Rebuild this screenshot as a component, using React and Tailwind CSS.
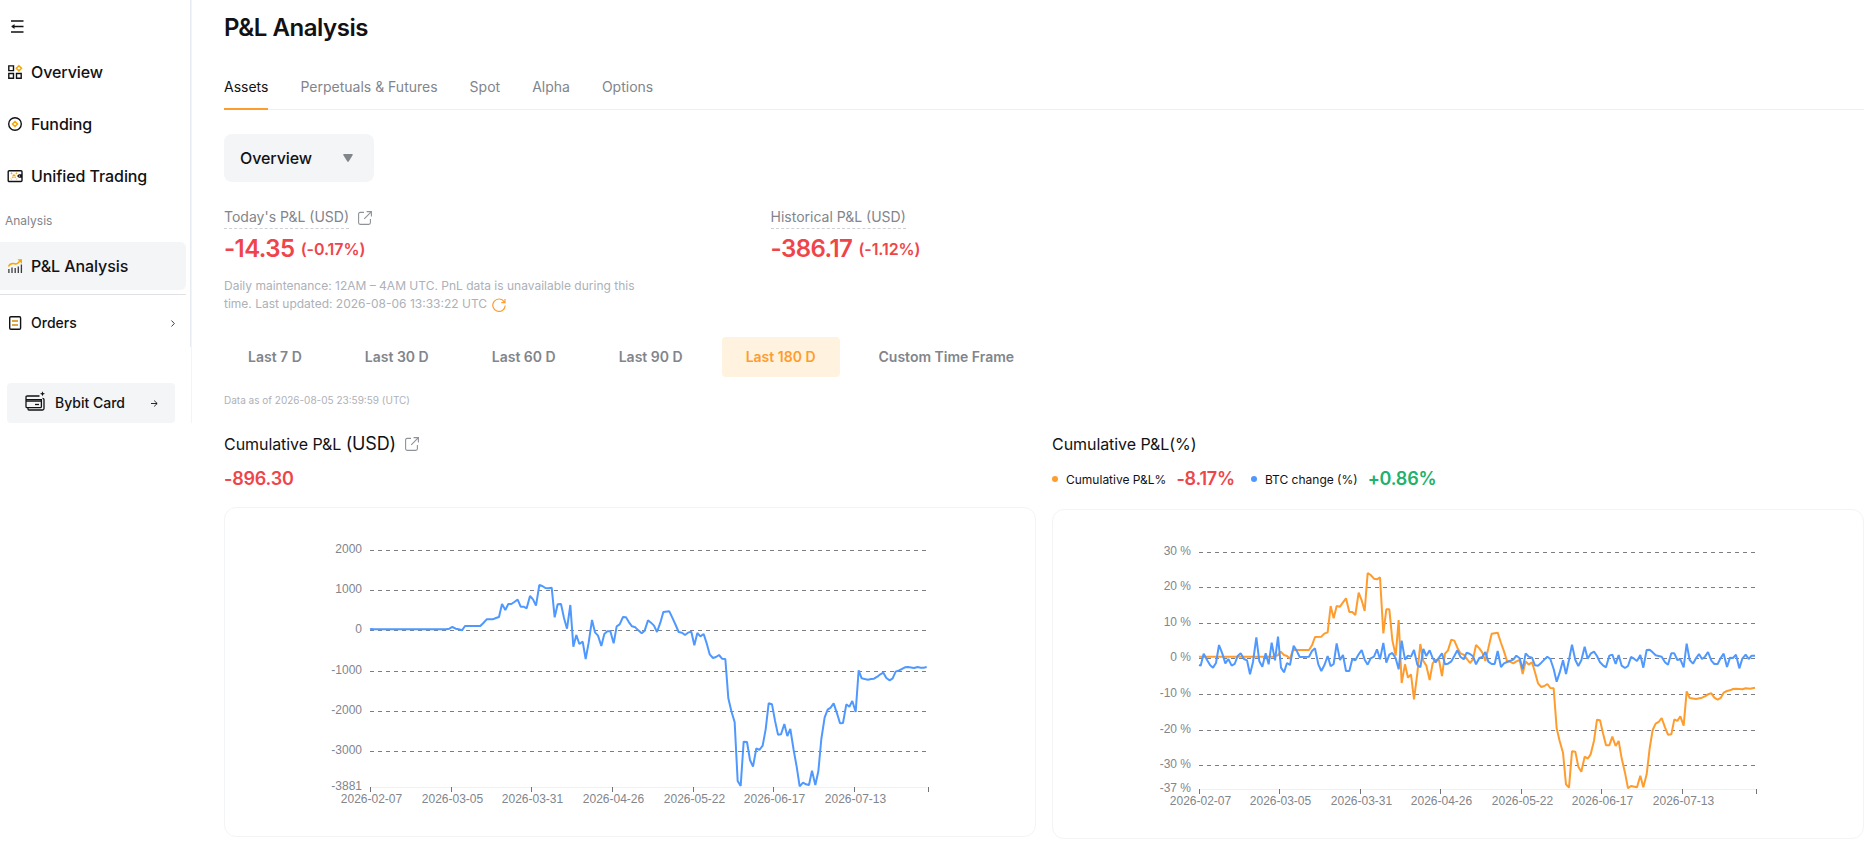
import React from "react";

const INK = "#121214";
const ORANGE = "#ff9c2e";
const BLUE = "#4f98ff";

const DATES = ["2026-02-07", "2026-03-05", "2026-03-31", "2026-04-26", "2026-05-22", "2026-06-17", "2026-07-13"];

// Series vertices, in thirds of a pixel from the plot origin.
const USD_LINE =
  "150,298 155,297 161,298 378,298 388,296 397,291 407,296 416,298 426,301 435,288 481,288 490,279 500,268 518,268 528,264 537,261 546,222 556,240 565,222 574,222 583,216 593,209 602,230 611,230 620,235 630,198 639,208 648,227 658,165 667,168 676,174 686,175 695,173 704,262 713,223 723,222 732,264 741,296 751,225 760,350 769,315 778,342 788,335 797,387 806,338 816,270 825,307 834,317 844,348 853,312 862,304 871,304 881,340 890,289 899,283 909,261 918,262 927,277 936,289 946,292 955,301 965,310 974,302 984,271 993,278 1002,287 1011,306 1021,278 1030,246 1048,244 1058,265 1067,285 1076,306 1086,308 1095,315 1104,308 1114,305 1123,346 1132,309 1141,319 1151,312 1160,340 1169,373 1179,384 1188,381 1197,375 1206,386 1216,387 1225,505 1234,543 1244,577 1253,753 1262,768 1271,635 1281,636 1290,690 1299,710 1309,655 1318,660 1328,647 1337,598 1346,520 1356,523 1365,572 1374,614 1383,613 1393,582 1402,618 1411,597 1421,660 1430,710 1439,769 1449,758 1458,763 1467,765 1476,722 1486,765 1495,724 1504,627 1514,562 1523,539 1532,533 1541,520 1551,550 1560,580 1569,579 1579,523 1588,530 1597,513 1607,546 1616,421 1625,445 1634,447 1644,449 1653,447 1662,446 1672,440 1681,433 1690,428 1699,444 1709,451 1718,445 1727,425 1737,421 1746,417 1755,412 1764,411 1782,414 1793,411 1802,413 1811,413 1820,411";
const PCT_LINE =
  "147,380 370,380 383,376 392,365 402,375 411,378 420,386 429,360 477,360 486,346 495,321 514,320 523,311 533,307 542,228 551,265 560,228 570,230 579,217 588,205 598,246 607,246 616,255 626,188 635,211 644,243 653,129 662,135 672,146 681,148 690,142 700,310 709,238 718,238 727,330 737,377 746,270 755,459 765,403 774,443 783,433 792,508 802,430 811,342 820,393 829,407 839,450 848,400 857,389 867,390 876,438 885,371 894,361 904,329 913,332 922,353 931,370 941,374 950,386 960,399 969,388 978,345 988,355 997,368 1006,393 1015,355 1025,311 1043,308 1053,339 1062,364 1071,393 1080,395 1090,400 1099,394 1109,390 1118,432 1127,394 1136,404 1146,397 1155,427 1164,460 1174,471 1183,468 1192,462 1201,474 1211,475 1220,595 1229,633 1239,668 1248,763 1257,773 1266,664 1276,665 1285,710 1294,725 1304,680 1313,686 1322,673 1332,632 1341,569 1350,571 1359,610 1368,646 1378,646 1387,620 1397,648 1406,633 1415,685 1425,728 1434,775 1443,768 1461,772 1471,737 1480,772 1490,733 1499,655 1508,600 1517,581 1526,576 1535,564 1545,592 1554,614 1564,613 1573,568 1582,573 1591,559 1601,587 1610,484 1619,504 1638,507 1656,503 1665,499 1674,493 1684,490 1693,503 1703,509 1712,504 1721,488 1731,483 1740,481 1749,477 1758,476 1777,478 1787,475 1800,476 1815,473";
const BTC_LINE =
  "147,405 152,407 161,371 170,388 180,405 189,413 198,399 207,345 217,371 226,400 235,387 245,407 254,402 263,378 272,370 282,387 291,391 300,433 309,396 319,322 328,394 337,410 347,370 356,403 365,338 375,391 384,320 393,413 402,427 411,399 420,405 431,347 440,362 449,381 477,380 486,363 495,355 505,403 514,423 523,406 533,378 542,409 551,402 560,340 570,390 579,375 588,423 598,423 607,387 616,391 626,373 635,360 644,389 653,404 662,385 672,380 681,358 690,388 700,339 709,398 718,374 727,369 737,385 746,418 755,332 765,389 774,377 783,380 792,360 802,404 811,412 820,357 829,378 839,361 848,384 857,397 867,383 876,370 885,403 894,401 904,394 913,378 922,361 931,380 941,388 950,368 960,372 969,379 978,403 988,384 997,381 1006,366 1015,395 1025,402 1034,402 1043,363 1053,411 1062,400 1071,396 1090,389 1099,377 1109,385 1118,418 1127,370 1136,380 1146,383 1155,406 1164,407 1174,398 1192,380 1201,387 1211,417 1220,455 1229,428 1239,391 1248,432 1257,390 1266,344 1276,390 1285,408 1294,391 1304,350 1313,386 1322,371 1332,365 1341,378 1350,397 1359,406 1368,412 1378,377 1387,374 1397,402 1406,375 1415,407 1425,414 1434,408 1443,381 1452,386 1461,393 1471,375 1480,413 1490,360 1499,359 1508,367 1517,376 1535,380 1545,397 1554,404 1564,370 1573,370 1582,390 1591,388 1601,412 1610,341 1619,390 1629,401 1638,385 1647,372 1656,387 1665,380 1674,366 1684,392 1693,402 1703,402 1712,384 1721,371 1731,411 1740,383 1749,384 1758,374 1768,415 1777,386 1787,374 1796,387 1805,377 1815,377";

function Chart({ origin, start, grid, ticks, min, labelX, series }) {
  return (
    <svg viewBox="0 0 810 328" className="block h-[328px] w-[810px] font-['Liberation_Sans',sans-serif]">
      <line x1={start} x2={start + 557} y1="279.5" y2="279.5" stroke="#f0f1f3" />
      {grid.map(([label, y]) => (
        <g key={label}>
          <line x1={start} x2={start + 557} y1={y} y2={y} stroke="#7b7f85" strokeDasharray="4 4" />
          <text x={labelX} y={y + 2.5} textAnchor="end" fontSize="12" fill="#81858c">{label}</text>
        </g>
      ))}
      <text x={labelX} y="282" textAnchor="end" fontSize="12" fill="#81858c">{min}</text>
      {ticks.map((x, i) => (
        <g key={x}>
          <line x1={x} x2={x} y1="279" y2="284" stroke="#71757a" />
          <text x={x + 1} y="295" textAnchor="middle" fontSize="12" fill="#81858c">{DATES[i]}</text>
        </g>
      ))}
      <g transform={`translate(${origin}) scale(0.33333)`} fill="none" strokeWidth="6" strokeLinejoin="bevel">
        {series.map(([color, points]) => (
          <polyline key={color} points={points} stroke={color} />
        ))}
      </g>
    </svg>
  );
}

function External({ className }) {
  return (
    <svg viewBox="0 0 14 14" className={className} fill="none" stroke="#8e9299" strokeWidth="1.1">
      <path d="M6 1.4H2.2Q.6 1.4 .6 3v8.800q0 1.600 1.600 1.600h8.600q1.600 0 1.600-1.600V8M8.600.6h4.800v4.800M13.200.8 6.200 7.800" />
    </svg>
  );
}

const icons = {
  overview: (
    <g fill="none" strokeWidth="1.4">
      <path stroke={INK} d="M.8.9h4.700v4.700H.8zM.8 8.500h4.700v4.700H.8zM8.500 8.500h4.700v4.700H8.500z" />
      <path stroke="#f7a600" strokeWidth="1.500" d="M10.900.7 13.500 3.300 10.900 5.900 8.300 3.300z" />
    </g>
  ),
  funding: (
    <g fill="none">
      <circle cx="7" cy="7" r="6.300" stroke={INK} strokeWidth="1.400" />
      <path stroke="#f7a600" strokeWidth="1.500" d="M7 4.500 9.500 7 7 9.500 4.500 7z" />
    </g>
  ),
  unified: (
    <g fill="none">
      <rect x=".2" y="1.700" width="13.800" height="10.800" rx="1" stroke={INK} strokeWidth="1.400" />
      <path stroke="#f7a600" strokeWidth="1.500" strokeDasharray="1.500 1.200" d="M3 3.800 9 10.200M9 3.800 3 10.200" />
      <path fill={INK} d="M14 5.200h-3.200L9 7l1.800 1.800H14z" />
      <circle cx="11.500" cy="7" r=".6" fill="#fff" />
    </g>
  ),
  pnl: (
    <g fill="none">
      <path stroke="#3b3c40" strokeWidth="1.300" d="M.9 10v4M4 8.500V14M7.200 9V14M10.300 7.500V14M13.400 5.500V14" />
      <path stroke="#f7a600" strokeWidth="1.500" d="M.4 7.500C2 4.500 4 4.300 5.500 4.500s3 1.200 4.500-.5l3-3" />
      <path fill="#f7a600" d="M9.500.3H14V5z" />
    </g>
  ),
};

function NavItem({ icon, label, active }) {
  return (
    <div className={`flex h-12 items-center gap-[9px] pl-2 text-base font-medium leading-6 tracking-[-0.08px] ${active ? "w-[186px] rounded-r-md bg-[#f3f5f7]" : ""}`}>
      <svg viewBox="0 0 14 14" className="h-3.5 w-3.5 overflow-visible">{icons[icon]}</svg>
      <span>{label}</span>
    </div>
  );
}

function Sidebar() {
  return (
    <aside className="h-[423px] w-48 shrink-0 border-r border-[#f3f4f6]">
      <div className="h-[347px] w-[191px] border-r border-[#e6ebf2]">
        <div className="flex h-12 items-center pl-[11px] pt-1">
          <svg viewBox="0 0 13 13" className="h-[13px] w-[13px]" fill="none" stroke={INK} strokeWidth="1.500">
            <path d="M0 1h12.500M5 6.500h7.500M0 12h12.500M.8 6.500H5" />
            <path d="M3.500 4 .4 6.500 3.500 9z" fill={INK} stroke="none" />
          </svg>
        </div>
        <nav className="flex flex-col gap-1">
          <NavItem icon="overview" label="Overview" />
          <NavItem icon="funding" label="Funding" />
          <NavItem icon="unified" label="Unified Trading" />
        </nav>
        <div className="flex h-[42px] items-center pl-[5px] text-xs leading-4 text-[#81858c]">Analysis</div>
        <NavItem icon="pnl" label="P&L Analysis" active />
        <div className="mt-1 h-px w-[186px] bg-[#dfe1e4]" />
        <div className="mt-1 flex h-12 w-[186px] items-center pl-2 text-sm font-medium">
          <svg viewBox="0 0 14 14" className="h-3.5 w-3.5" fill="none">
            <rect x="1.700" y=".7" width="10.900" height="12.600" rx="1.200" stroke={INK} strokeWidth="1.400" />
            <path d="M4 5h6M4 9h6" stroke="#d48806" strokeWidth="1.500" />
          </svg>
          <span className="ml-[9px] flex-1">Orders</span>
          <svg viewBox="0 0 4 7" className="mr-[11px] h-[7px] w-1" fill="none" stroke={INK} strokeWidth="0.8">
            <path d="M.5.5l2.800 3-2.800 3" />
          </svg>
        </div>
      </div>
      <div className="ml-[7px] mt-9 flex h-10 w-[168px] items-center rounded bg-[#f3f5f7] pl-[18px] pr-[17px] text-sm font-medium">
        <svg viewBox="0 0 20 20" className="-mt-1 h-5 w-5" fill="none" stroke={INK} strokeWidth="1.300">
          <path d="M14.500 5H2.200Q1 5 1 6.200v9.300q0 1.200 1.200 1.200h13q1.200 0 1.200-1.200V8M1 8.600h15M1 10.200h15M3 17v1q0 1 1 1h13.500q1.500 0 1.500-1.500V8.500q0-1.200-1.500-1.200" />
          <path d="M10 13.500h4" />
          <path d="m17.500.2.700 1.800 1.800.7-1.800.7-.7 1.800-.7-1.800-1.800-.7 1.800-.7z" fill={INK} stroke="none" />
        </svg>
        <span className="ml-[10px] flex-1">Bybit Card</span>
        <svg viewBox="0 0 7 7" className="h-[7px] w-[7px]" fill="none" stroke={INK} strokeWidth="0.9">
          <path d="M0 3.500h6M3.200.6l3 2.900-3 2.900" />
        </svg>
      </div>
    </aside>
  );
}

function Metric({ label, value, pct, link }) {
  return (
    <div className="w-[546.5px]">
      <div className="flex h-[23px] items-center">
        <span className="h-[23px] border-b border-dashed border-[#cdd0d6] text-sm leading-[22px] text-[#81858c]">{label}</span>
        {link && <External className="ml-[9px] mt-[1px] h-3.5 w-3.5" />}
      </div>
      <div className="mt-1 flex h-8 items-center gap-[6px] text-[#ef454a]">
        <span className="text-2xl font-semibold leading-8 tracking-[-0.55px]">{value}</span>
        <span className="text-base font-semibold leading-8 tracking-[-0.06px]">{pct}</span>
      </div>
    </div>
  );
}

const RANGES = ["Last 7 D", "Last 30 D", "Last 60 D", "Last 90 D", "Last 180 D", "Custom Time Frame"];

export default function App() {
  return (
    <div className="flex h-[862px] w-[1869px] overflow-hidden bg-white font-['Inter',sans-serif] text-[#121214]">
      <Sidebar />
      <main className="ml-8 w-[1640px]">
        <h1 className="h-[66px] pt-3 text-2xl font-semibold leading-8 tracking-[-0.45px]">P&amp;L Analysis</h1>
        <div className="flex h-11 gap-8 border-b border-[#eeeff1] text-sm leading-[42px] text-[#81858c]">
          <span className="h-11 border-b-2 border-[#ff9c2e] text-[#121214]">Assets</span>
          <span>Perpetuals &amp; Futures</span>
          <span>Spot</span>
          <span>Alpha</span>
          <span>Options</span>
        </div>
        <div className="mt-6 flex h-12 w-[150px] items-center justify-between rounded-lg bg-[#f3f5f7] pl-4 pr-[21px] text-base font-medium tracking-[-0.08px]">
          <span>Overview</span>
          <svg viewBox="0 0 10 8" className="h-2 w-2.5" fill="#81858c"><path d="M1 0h8q1.400 0 .6 1.200L5.700 7.400q-.7.900-1.400 0L.4 1.200Q-.4 0 1 0z" /></svg>
        </div>
        <div className="mt-6 flex">
          <Metric label="Today's P&L (USD)" value="-14.35" pct="(-0.17%)" link />
          <Metric label="Historical P&L (USD)" value="-386.17" pct="(-1.12%)" />
        </div>
        <div className="mt-3 w-[424px] text-xs leading-[18px] text-[#adb1b8]">
          Daily maintenance: 12AM – 4AM UTC. PnL data is unavailable during this
          <div className="flex items-center gap-[5px]">
            time. Last updated: 2026-08-06 13:33:22 UTC
            <svg viewBox="0 0 14 14" className="mt-[2px] h-3.5 w-3.5" fill="none" stroke={ORANGE} strokeWidth="1.200">
              <path d="M12.200 3.800A6.200 6.200 0 1 0 13.200 7.500M13 1v3.600H9.300" />
            </svg>
          </div>
        </div>
        <div className="mt-6 flex gap-[15px] text-sm font-semibold text-[#81858c]">
          {RANGES.map((r) => (
            <span key={r} className={`rounded px-6 leading-10 ${r === "Last 180 D" ? "bg-[#fff3e0] text-[#ff9c2e]" : ""}`}>{r}</span>
          ))}
        </div>
        <div className="mt-4 text-[10px] leading-[14px] text-[#adb1b8]">Data as of 2026-08-05 23:59:59 (UTC)</div>
        <div className="mt-6 flex gap-4">
          <section>
            <div className="flex h-[26px] items-center text-base tracking-[-0.06px]">
              <span>Cumulative P&amp;L <span className="text-lg leading-[26px] tracking-[-0.2px]">(USD)</span></span>
              <External className="ml-[9px] h-3.5 w-3.5" />
            </div>
            <div className="mt-2 h-[26px] text-lg font-semibold leading-[27px] tracking-[-0.2px] text-[#ef454a]">-896.30</div>
            <div className="mt-4 h-[330px] w-[812px] rounded-xl border border-[#f3f4f5]">
              <Chart
                origin="95 22"
                start={145}
                labelX={137}
                min="-3881"
                grid={[["2000", 42.5], ["1000", 82.5], ["0", 122.5], ["-1000", 163.5], ["-2000", 203.5], ["-3000", 243.5]]}
                ticks={[145.5, 226.5, 306.5, 387.5, 468.5, 548.5, 629.5, 703.5]}
                series={[[BLUE, USD_LINE]]}
              />
            </div>
          </section>
          <section>
            <div className="flex h-[26px] items-center text-base tracking-[-0.06px]">Cumulative P&amp;L(%)</div>
            <div className="mt-2 flex h-[26px] items-center text-xs">
              <i className="mt-[2px] h-1.5 w-1.5 rounded-full bg-[#ff9c2e]" />
              <span className="ml-2 mt-[3px]">Cumulative P&amp;L%</span>
              <b className="ml-[10px] text-lg font-semibold leading-[27px] tracking-[-0.2px] text-[#ef454a]">-8.17%</b>
              <i className="ml-4 mt-[2px] h-1.5 w-1.5 rounded-full bg-[#4f98ff]" />
              <span className="ml-2 mt-[3px]">BTC change (%)</span>
              <b className="ml-[10px] text-lg font-semibold leading-[27px] tracking-[-0.2px] text-[#20b26c]">+0.86%</b>
            </div>
            <div className="mt-[18px] h-[330px] w-[812px] rounded-xl border border-[#f3f4f5]">
              <Chart
                origin="97 20"
                start={146}
                labelX={138}
                min="-37 %"
                grid={[["30 %", 42.5], ["20 %", 77.5], ["10 %", 113.5], ["0 %", 148.5], ["-10 %", 184.5], ["-20 %", 220.5], ["-30 %", 255.5]]}
                ticks={[146.5, 226.5, 307.5, 387.5, 468.5, 548.5, 629.5, 703.5]}
                series={[[ORANGE, PCT_LINE], [BLUE, BTC_LINE]]}
              />
            </div>
          </section>
        </div>
      </main>
    </div>
  );
}
